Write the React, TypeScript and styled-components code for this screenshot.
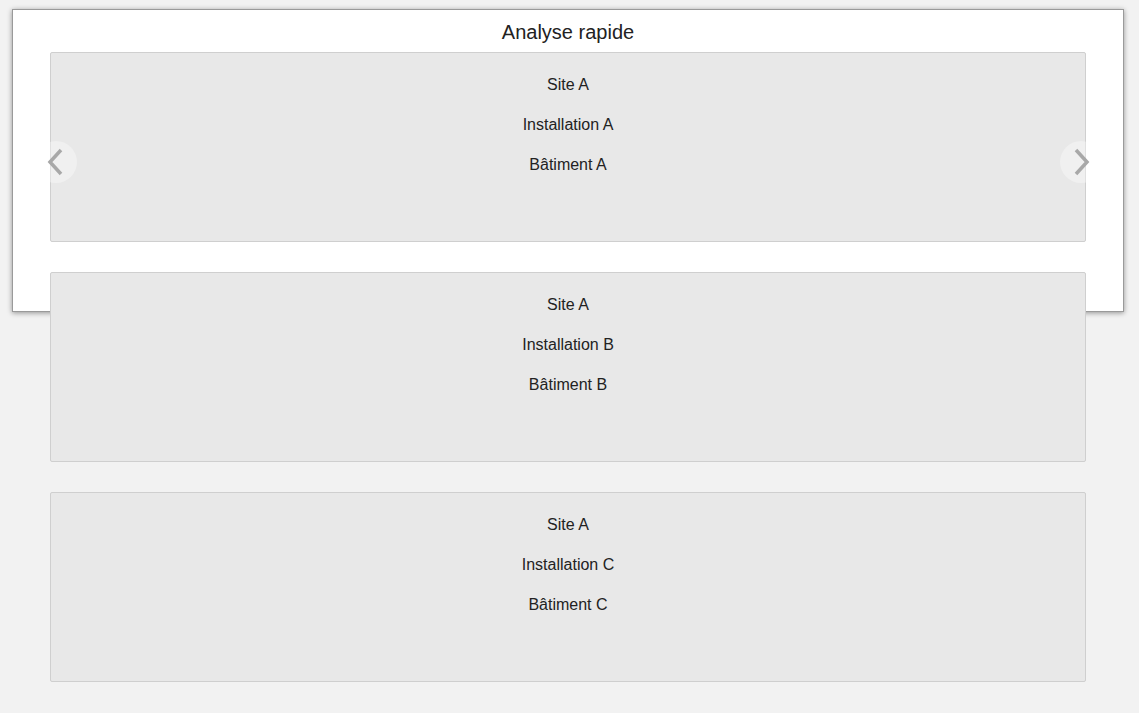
import React from "react";
import styled, { createGlobalStyle } from "styled-components";

const GlobalStyle = createGlobalStyle`
  html, body {
    margin: 0;
    background-color: #f2f2f2;
    font-family: "Liberation Sans", Arial, sans-serif;
    color: #222;
  }
`;

const Page = styled.div`
  padding: 9px 15px 0 12px;
  min-height: 713px;
  box-sizing: border-box;
`;

const Panel = styled.section`
  position: relative;
  height: 303px;
  box-sizing: border-box;
  background-color: #fff;
  border: 1px solid #9a9a9a;
  box-shadow: 0 1px 5px rgba(0, 0, 0, 0.4);
`;

const Title = styled.h2`
  margin: 0;
  padding: 10px 0 8px;
  font-size: 20px;
  font-weight: normal;
  line-height: 24px;
  text-align: center;
  color: #222;
`;

const CardList = styled.div`
  display: flex;
  flex-direction: column;
  gap: 30px;
  padding: 0 37px;
`;

const Card = styled.div`
  height: 190px;
  box-sizing: border-box;
  background-color: #e8e8e8;
  border: 1px solid #cfcfcf;
  border-radius: 2px;
  padding-top: 20px;
  text-align: center;
  p {
    margin: 0 0 16px;
    font-size: 16px;
    line-height: 24px;
    color: #222;
  }
`;

const Arrow = styled.button<{ $side: "left" | "right" }>`
  position: absolute;
  top: 131px;
  ${(p) => (p.$side === "left" ? "left: 22px;" : "right: 21px;")}
  width: 42px;
  height: 42px;
  border: none;
  border-radius: 50%;
  background-color: rgba(255, 255, 255, 0.35);
  padding: 0;
  display: flex;
  align-items: center;
  justify-content: center;
  cursor: pointer;
`;

const Chevron = ({ dir }: { dir: "left" | "right" }) => (
  <svg width="18" height="30" viewBox="0 0 18 30">
    <path
      d={dir === "left" ? "M14 3 L3 15 L14 27" : "M4 3 L15 15 L4 27"}
      fill="none"
      stroke="#a8a8a8"
      strokeWidth="3.5"
    />
  </svg>
);

const items = [
  ["Site A", "Installation A", "Bâtiment A"],
  ["Site A", "Installation B", "Bâtiment B"],
  ["Site A", "Installation C", "Bâtiment C"],
];

const App = () => {
  return (
    <Page>
      <GlobalStyle />
      <Panel>
        <Title>Analyse rapide</Title>
        <CardList>
          {items.map((item, i) => (
            <Card key={i}>
              {item.map((el) => (
                <p key={el}>{el}</p>
              ))}
            </Card>
          ))}
        </CardList>
        <Arrow $side="left" aria-label="Précédent">
          <Chevron dir="left" />
        </Arrow>
        <Arrow $side="right" aria-label="Suivant">
          <Chevron dir="right" />
        </Arrow>
      </Panel>
    </Page>
  );
};

export default App;
